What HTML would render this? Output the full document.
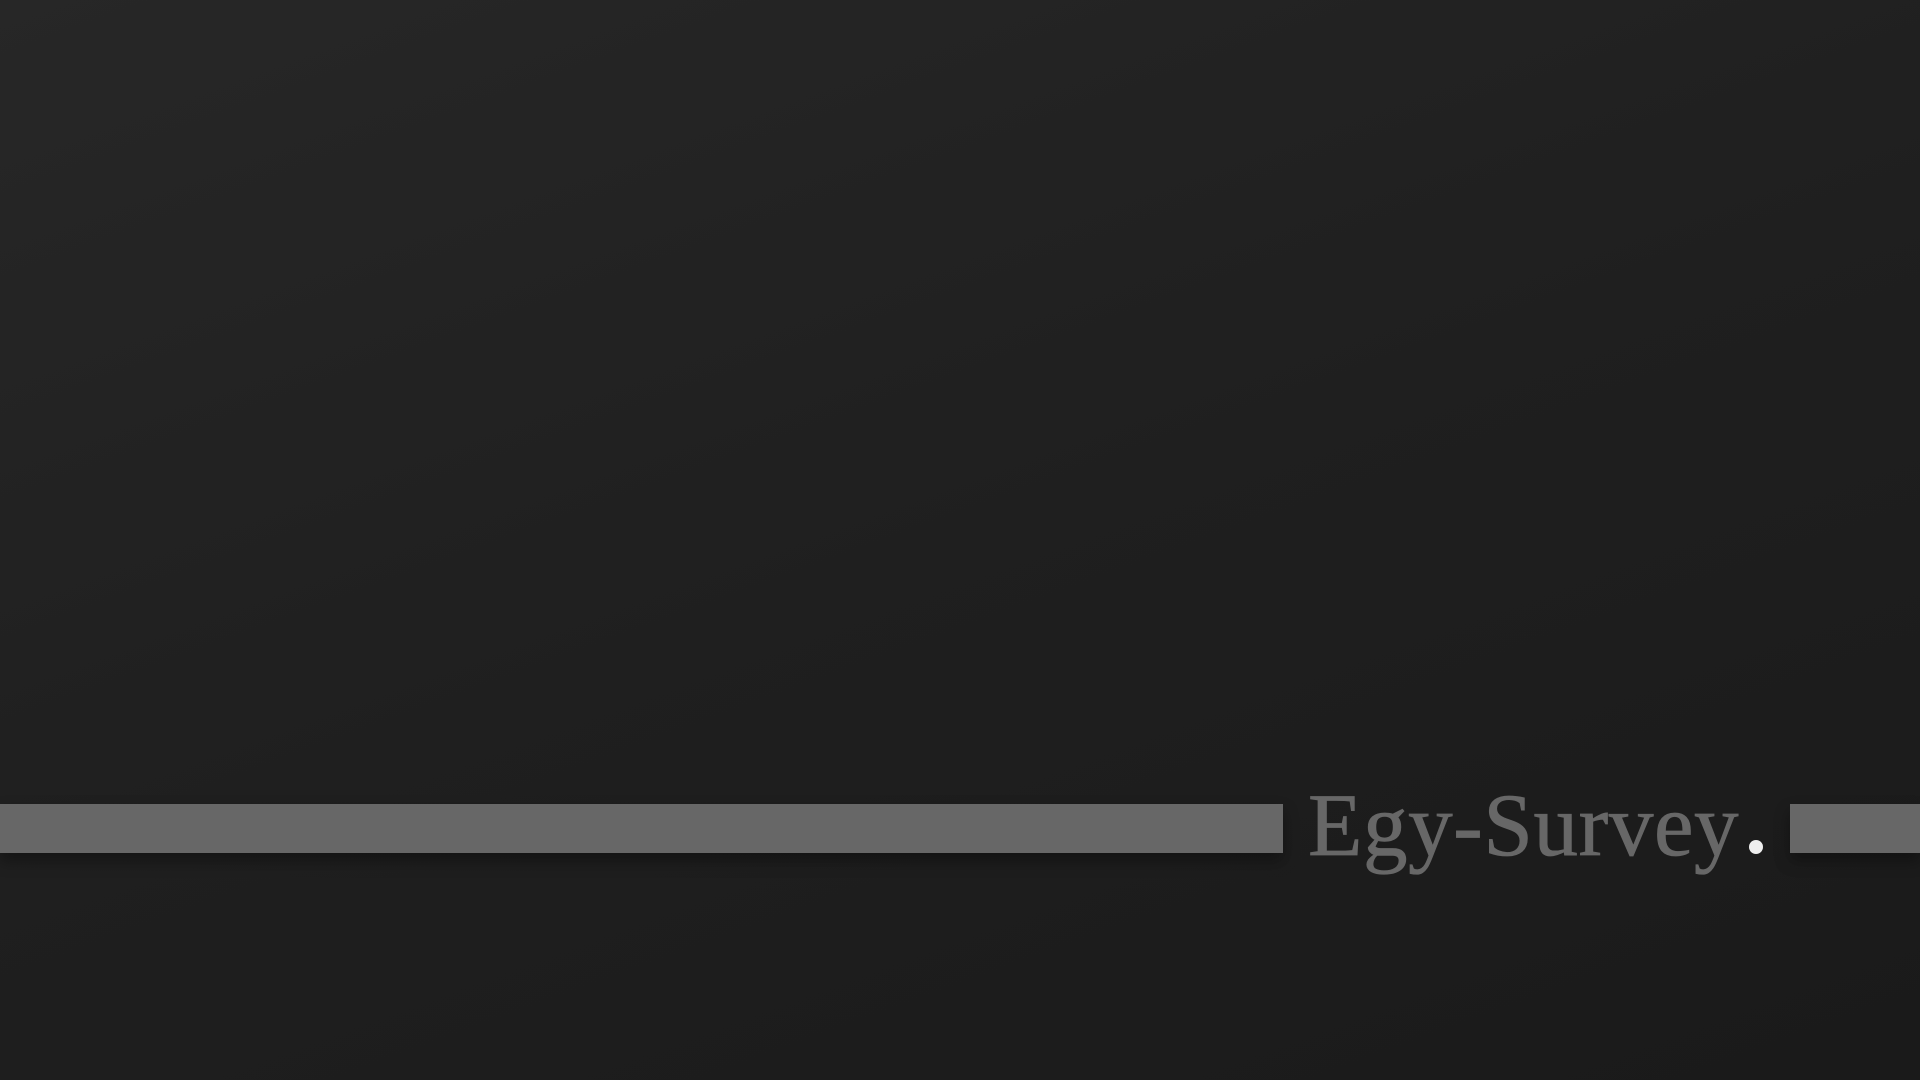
<!DOCTYPE html>
<html><head><meta charset="utf-8"><style>
html,body{margin:0;padding:0;width:1920px;height:1080px;overflow:hidden;background:linear-gradient(160deg,#272727 0%,#1f1f1f 50%,#1a1a1a 100%);}
.bar{position:absolute;top:804px;height:49px;background:#676767;box-shadow:0 8px 14px rgba(0,0,0,0.35);}
.t{position:absolute;left:1308px;top:776px;font-family:"Liberation Serif",serif;font-size:89px;line-height:100px;color:#676767;-webkit-text-stroke:0.8px #676767;letter-spacing:0.6px;white-space:nowrap;}
.dot{position:absolute;left:1749px;top:840px;width:14px;height:14px;border-radius:50%;background:#eee;}
</style></head><body>
<div class="bar" style="left:0;width:1283px"></div>
<div class="bar" style="left:1790px;width:130px"></div>
<div class="t">Egy-Survey</div>
<div class="dot"></div>
</body></html>
